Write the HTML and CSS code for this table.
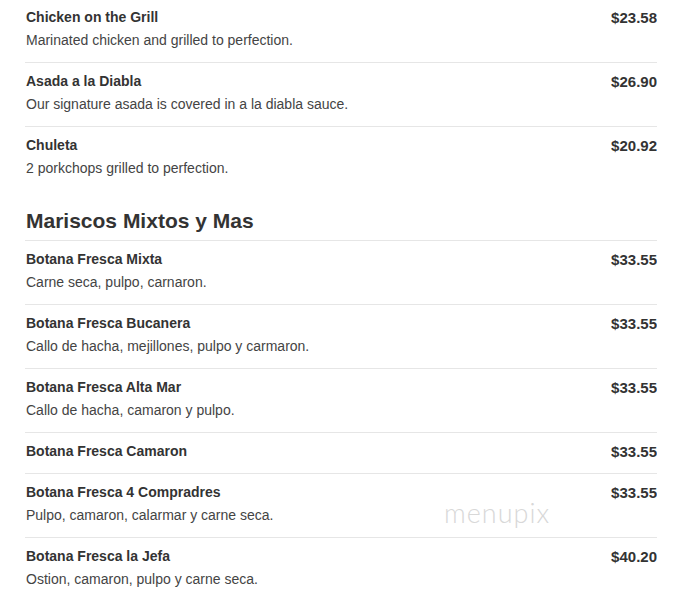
FILE: index.html
```html
<!DOCTYPE html>
<html>
<head>
<meta charset="utf-8">
<link rel="stylesheet" href="styles.css">
</head>
<body>
<div class="menu">
  <div class="item first">
    <div class="row"><span class="name">Chicken on the Grill</span><span class="price">$23.58</span></div>
    <div class="desc">Marinated chicken and grilled to perfection.</div>
  </div>
  <div class="item">
    <div class="row"><span class="name">Asada a la Diabla</span><span class="price">$26.90</span></div>
    <div class="desc">Our signature asada is covered in a la diabla sauce.</div>
  </div>
  <div class="item last">
    <div class="row"><span class="name">Chuleta</span><span class="price">$20.92</span></div>
    <div class="desc">2 porkchops grilled to perfection.</div>
  </div>

  <h2 class="section">Mariscos Mixtos y Mas</h2>

  <div class="item">
    <div class="row"><span class="name">Botana Fresca Mixta</span><span class="price">$33.55</span></div>
    <div class="desc">Carne seca, pulpo, carnaron.</div>
  </div>
  <div class="item">
    <div class="row"><span class="name">Botana Fresca Bucanera</span><span class="price">$33.55</span></div>
    <div class="desc">Callo de hacha, mejillones, pulpo y carmaron.</div>
  </div>
  <div class="item">
    <div class="row"><span class="name">Botana Fresca Alta Mar</span><span class="price">$33.55</span></div>
    <div class="desc">Callo de hacha, camaron y pulpo.</div>
  </div>
  <div class="item">
    <div class="row"><span class="name">Botana Fresca Camaron</span><span class="price">$33.55</span></div>
  </div>
  <div class="item">
    <div class="row"><span class="name">Botana Fresca 4 Compradres</span><span class="price">$33.55</span></div>
    <div class="desc">Pulpo, camaron, calarmar y carne seca.</div>
  </div>
  <div class="item last">
    <div class="row"><span class="name">Botana Fresca la Jefa</span><span class="price">$40.20</span></div>
    <div class="desc">Ostion, camaron, pulpo y carne seca.</div>
  </div>
</div>
<div class="watermark">menupix</div>
</body>
</html>
```

FILE: styles.css
```css
html, body {
  background: #fff;
}
body {
  margin: 0 21px 0 25px;
  font-family: "Liberation Sans", Arial, sans-serif;
  color: #333;
  position: relative;
}
.menu {
  display: flex;
  flex-direction: column;
}
.item {
  padding: 8px 0 12px;
  border-bottom: 1px solid #e6e6e6;
}
.item.first {
  padding-top: 7px;
}
.item.last {
  border-bottom: none;
}
.row {
  display: flex;
  justify-content: space-between;
  align-items: center;
  height: 20px;
}
.name {
  font-size: 14px;
  font-weight: bold;
  color: #333;
  padding-left: 1px;
}
.price {
  font-size: 15px;
  font-weight: bold;
  color: #333;
}
.desc {
  margin-top: 4px;
  font-size: 14px;
  line-height: 19px;
  color: #444;
  padding-left: 1px;
}
.section {
  margin: 0;
  padding: 19px 0 7px 1px;
  font-size: 21px;
  line-height: 24px;
  font-weight: bold;
  color: #333;
  border-bottom: 1px solid #e6e6e6;
}
.watermark {
  position: absolute;
  left: 419px;
  top: 496px;
  font-family: "Lato", "Open Sans", sans-serif;
  font-weight: 300;
  font-size: 27px;
  letter-spacing: 1px;
  color: #d8d8d8;
}
```
